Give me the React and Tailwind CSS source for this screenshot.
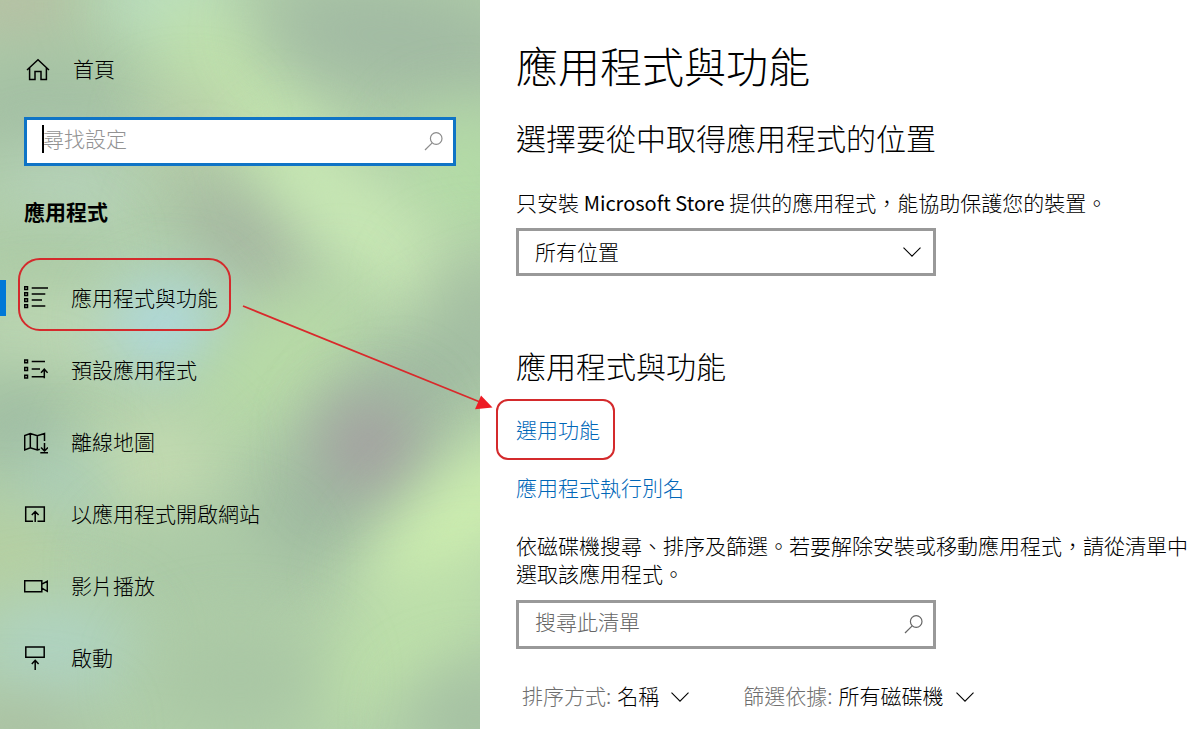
import React from "react";

const BLOBS = [
  [15, 5, 60, 35, 0, "#b9bca3"],
  [165, 0, 60, 28, 0, "#bfe6d0"],
  [40, 110, 100, 65, 0, "#a4c0a4"],
  [240, 90, 125, 44, 50, "#c1e3ad"],
  [400, 40, 140, 60, 10, "#a2bba3"],
  [70, 190, 80, 40, 0, "#b7d3bb"],
  [190, 130, 40, 30, 0, "#bccaa8"],
  [465, 180, 60, 70, 0, "#b3dba6"],
  [245, 235, 80, 34, 35, "#a3b19f"],
  [375, 235, 150, 40, 42, "#cbebb6"],
  [480, 300, 60, 50, 0, "#a8c2a3"],
  [40, 255, 60, 25, 0, "#a9c7a3"],
  [60, 335, 90, 30, 0, "#c1dab8"],
  [165, 325, 52, 44, 0, "#aedae6"],
  [280, 360, 105, 42, -40, "#b8dca6"],
  [15, 425, 55, 45, 0, "#9dbaa2"],
  [435, 375, 115, 46, -35, "#a0baa1"],
  [335, 490, 125, 58, -40, "#a0bba1"],
  [368, 445, 46, 44, 0, "#a59ba1"],
  [155, 465, 60, 48, 0, "#c5dcb2"],
  [60, 485, 40, 35, 0, "#abcfc0"],
  [10, 560, 50, 45, 0, "#b7d0a0"],
  [200, 570, 85, 50, 0, "#abc9a6"],
  [462, 520, 120, 44, -42, "#cff0b0"],
  [400, 645, 120, 44, -35, "#bee1aa"],
  [55, 650, 80, 48, 0, "#afd3c3"],
  [240, 680, 90, 50, 0, "#a9c6a4"],
  [475, 720, 65, 45, 0, "#a4bfa2"],
  [15, 735, 80, 30, 0, "#a9bca0"],
];

function Wallpaper() {
  return (
    <svg
      className="absolute inset-0 h-full w-full"
      viewBox="0 0 480 729"
      preserveAspectRatio="none"
      aria-hidden="true"
    >
      <defs>
        <filter
          id="soften"
          x="-80%"
          y="-250%"
          width="260%"
          height="600%"
          colorInterpolationFilters="sRGB"
        >
          <feGaussianBlur stdDeviation="33" />
        </filter>
      </defs>
      <rect width="480" height="729" fill="#b1cfa9" />
      {BLOBS.map(([cx, cy, rx, ry, angle, fill]) => (
        <g key={`${cx}-${cy}`} transform={`rotate(${angle} ${cx} ${cy})`}>
          <ellipse cx={cx} cy={cy} rx={rx} ry={ry} fill={fill} filter="url(#soften)" />
        </g>
      ))}
    </svg>
  );
}

function Icon({ children }) {
  return (
    <svg
      className="size-6 shrink-0"
      viewBox="0 0 24 24"
      fill="none"
      stroke="currentColor"
      strokeWidth="1.5"
      aria-hidden="true"
    >
      {children}
    </svg>
  );
}

const HomeIcon = () => (
  <Icon>
    <path d="M1 13 12 2.7 23 13M3.6 11v11.4H9v-8h6v8h5.4V11" />
  </Icon>
);

const AppsIcon = () => (
  <Icon>
    <path d="M.7.7h2.8v2.8H.7zM.7 6.7h2.8v2.8H.7zM.7 12.7h2.8v2.8H.7zM.7 18.7h2.8v2.8H.7zM7.7 2H24M7.7 8h13.6M7.7 14H18M7.7 20h13.6" />
  </Icon>
);

const DefaultsIcon = () => (
  <Icon>
    <path d="M.7 1.9h2.8v2.8H.7zM.7 9.6h2.8v2.8H.7zM.7 17.3h2.8v2.8H.7zM7.7 3.5H21M7.7 11H16M7.7 18.7h12.6M20.3 20.2v-9M17 14.8l3.3-3.6 3.3 3.6" />
  </Icon>
);

const MapIcon = () => (
  <Icon>
    <path d="M15.8 19.2 13.3 20l-7-2.2L.7 20V5.5l5.6-2 7 2.2 7.2-2.2V11M6.3 3.5v14.3M13.3 5.7V20M20.5 13v7.8M17 17.5l3.5 3.5 3.5-3.5M16.3 22.8H24" />
  </Icon>
);

const WebIcon = () => (
  <Icon>
    <path d="M9 19.3H1.7V4.9h18.6v14.4h-6.8M11.2 20V9.8M7.8 13.1l3.4-3.5 3.4 3.5" />
  </Icon>
);

const VideoIcon = () => (
  <Icon>
    <path d="M.7 6.7h17.1v11H.7zM17.8 10.2l5.5-2.9v10l-5.5-3.2" />
  </Icon>
);

const StartupIcon = () => (
  <Icon>
    <path d="M1.8.9h18.4v10.4H1.8zM11.2 24v-9.6M7.8 17.9l3.4-3.6 3.4 3.6" />
  </Icon>
);

function SearchIcon({ className }) {
  return (
    <svg
      className={className}
      viewBox="0 0 20 20"
      fill="none"
      stroke="currentColor"
      strokeWidth="1.2"
      aria-hidden="true"
    >
      <circle cx="12.2" cy="7.5" r="5.8" />
      <path d="M8.2 11.8 1 19" />
    </svg>
  );
}

function Chevron({ className }) {
  return (
    <svg
      className={className}
      viewBox="0 0 18 10"
      fill="none"
      stroke="currentColor"
      strokeWidth="1.1"
      aria-hidden="true"
    >
      <path d="M.5.6 9 9.1 17.5.6" />
    </svg>
  );
}

const NAV = [
  { label: "應用程式與功能", icon: AppsIcon, active: true },
  { label: "預設應用程式", icon: DefaultsIcon },
  { label: "離線地圖", icon: MapIcon },
  { label: "以應用程式開啟網站", icon: WebIcon },
  { label: "影片播放", icon: VideoIcon },
  { label: "啟動", icon: StartupIcon },
];

function NavItem({ label, icon: Glyph, active }) {
  return (
    <li>
      <a
        href="#"
        aria-current={active ? "page" : undefined}
        className="relative flex h-[72px] items-center gap-[23px] pl-6"
      >
        {active && (
          <>
            <span className="absolute top-[18px] left-0 h-9 w-[6px] bg-[#0078d7]" />
            <span className="absolute -top-1 left-[18px] h-[73px] w-[213px] rounded-[22px] border-2 border-[#d42a2c]" />
          </>
        )}
        <Glyph />
        <span className="pb-0.5">{label}</span>
      </a>
    </li>
  );
}

function Sidebar() {
  return (
    <aside className="relative w-[480px] shrink-0 overflow-hidden">
      <Wallpaper />
      <div className="relative pt-9">
        <a href="#" className="flex h-[66px] items-center gap-[23px] pl-[26px]">
          <HomeIcon />
          <span className="pb-0.5">首頁</span>
        </a>
        <div className="relative mx-6 mt-[15px]">
          <input
            type="text"
            aria-label="尋找設定"
            placeholder="尋找設定"
            className="block h-[49px] w-full border-[3px] border-[#0f74c6] bg-white pr-10 pb-[7px] pl-4 outline-none placeholder:text-[#929292]"
          />
          <span className="absolute top-2 left-[18px] h-7 w-[2px] bg-black" />
          <SearchIcon className="absolute top-[14px] right-3 size-5 text-[#8c8c8c]" />
        </div>
        <h2 className="mt-[22px] flex h-12 items-center pb-0.5 pl-6 font-bold">應用程式</h2>
        <nav className="mt-[26px] pb-[35px]">
          <ul>
            {NAV.map((item) => (
              <NavItem key={item.label} {...item} />
            ))}
          </ul>
        </nav>
      </div>
    </aside>
  );
}

function FilterSelect({ id, label, value }) {
  return (
    <div className="flex items-center gap-[6px]">
      <label htmlFor={id} className="text-[#6e6e6e]">
        {label}
      </label>
      <div className="relative">
        <select id={id} className="block h-7 appearance-none bg-transparent pr-[30px] outline-none">
          <option>{value}</option>
        </select>
        <Chevron className="pointer-events-none absolute top-[11px] right-0 h-[10px] w-[18px]" />
      </div>
    </div>
  );
}

function Content() {
  return (
    <main className="min-w-0 flex-1 pt-[37px] pr-2 pl-9">
      <h1 className="text-[42px] leading-[56px]">應用程式與功能</h1>
      <h2 className="mt-6 text-[30px] leading-10">選擇要從中取得應用程式的位置</h2>
      <p className="mt-[31px]">
        <label htmlFor="source">
          只安裝 <span className="text-xl leading-7 font-normal">Microsoft Store</span>{" "}
          提供的應用程式，能協助保護您的裝置。
        </label>
      </p>
      <div className="relative mt-[11px] max-w-[420px]">
        <select
          id="source"
          className="block h-12 w-full appearance-none border-[3px] border-[#999999] bg-white pr-10 pb-[3px] pl-4 outline-none"
        >
          <option>所有位置</option>
        </select>
        <Chevron className="pointer-events-none absolute top-[19px] right-[15px] h-[10px] w-[18px]" />
      </div>

      <h2 className="mt-[69px] text-[30px] leading-10">應用程式與功能</h2>
      <div className="mt-[30px] flex flex-col items-start gap-[30px] text-[#0067b8]">
        <a href="#" className="relative">
          選用功能
          <span className="absolute -top-4 -left-5 h-[61px] w-[119px] rounded-xl border-2 border-[#d42a2c]" />
        </a>
        <a href="#">應用程式執行別名</a>
      </div>
      <p className="mt-[30px]">
        依磁碟機搜尋、排序及篩選。若要解除安裝或移動應用程式，請從清單中選取該應用程式。
      </p>
      <div className="relative mt-[13px] max-w-[420px]">
        <input
          type="text"
          aria-label="搜尋此清單"
          placeholder="搜尋此清單"
          className="block h-[49px] w-full border-[3px] border-[#999999] bg-white pr-10 pb-[7px] pl-4 outline-none placeholder:text-[#666666]"
        />
        <SearchIcon className="absolute top-[14px] right-3 size-5 text-[#666666]" />
      </div>
      <div className="mt-8 flex gap-[54px] pl-[6px]">
        <FilterSelect id="sort" label="排序方式:" value="名稱" />
        <FilterSelect id="filter" label="篩選依據:" value="所有磁碟機" />
      </div>
    </main>
  );
}

function Arrow() {
  return (
    <svg
      className="pointer-events-none absolute top-[300px] left-[240px] h-[115px] w-[260px]"
      viewBox="0 0 260 115"
      aria-hidden="true"
    >
      <path d="M3 6 240 102" stroke="#d9292b" strokeWidth="1.8" fill="none" />
      <path d="M252.5 107.5 241 95.5 235 109.3z" fill="#ed1c24" />
    </svg>
  );
}

export default function App() {
  return (
    <div
      lang="zh-Hant"
      className="relative flex min-h-screen bg-white font-['Noto_Sans_CJK_TC',sans-serif] text-[21px] leading-7 font-light text-black"
    >
      <Sidebar />
      <Content />
      <Arrow />
    </div>
  );
}
